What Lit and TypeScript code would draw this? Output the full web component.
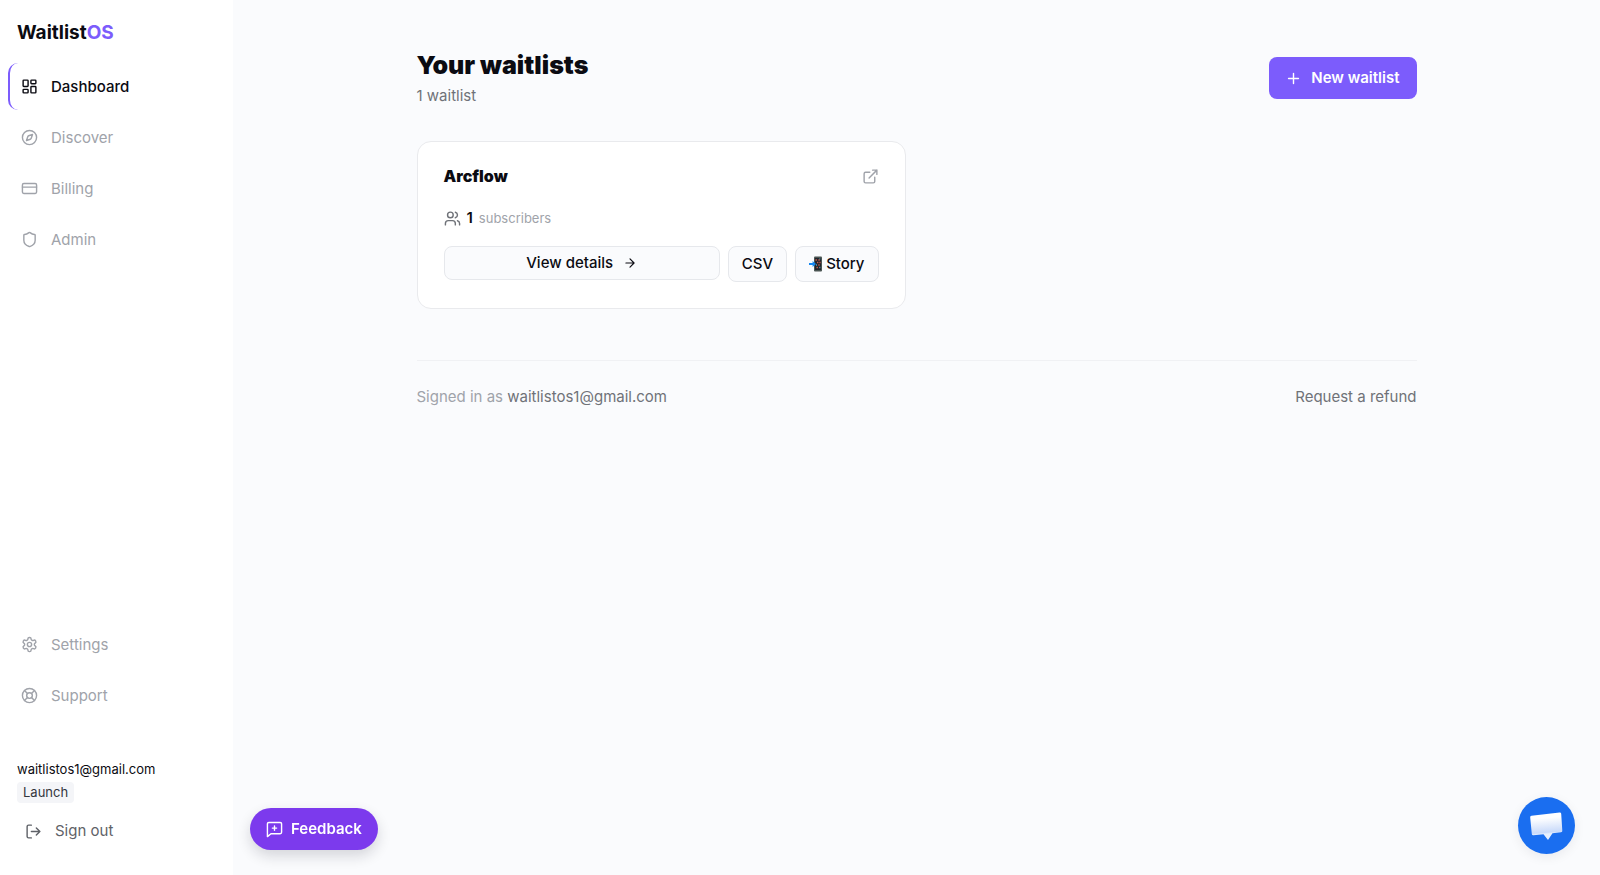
import { LitElement, html, css, svg } from "lit";
import { customElement, property } from "lit/decorators.js";

const ICONS: Record<string, unknown> = {
  dashboard: svg`<rect x="3" y="3" width="7" height="9" rx="1"/><rect x="14" y="3" width="7" height="5" rx="1"/><rect x="14" y="12" width="7" height="9" rx="1"/><rect x="3" y="16" width="7" height="5" rx="1"/>`,
  compass: svg`<circle cx="12" cy="12" r="10"/><path d="m16.24 7.76-1.8 5.41a2 2 0 0 1-1.27 1.27L7.76 16.24l1.8-5.41a2 2 0 0 1 1.27-1.27z"/>`,
  card: svg`<rect x="2" y="5" width="20" height="14" rx="2"/><path d="M2 10h20"/>`,
  shield: svg`<path d="M20 13c0 5-3.5 7.5-7.66 8.95a1 1 0 0 1-.67-.01C7.5 20.5 4 18 4 13V6a1 1 0 0 1 1-1c2 0 4.5-1.2 6.24-2.72a1.17 1.17 0 0 1 1.52 0C14.51 3.81 17 5 19 5a1 1 0 0 1 1 1z"/>`,
  settings: svg`<path d="M12.22 2h-.44a2 2 0 0 0-2 2v.18a2 2 0 0 1-1 1.73l-.43.25a2 2 0 0 1-2 0l-.15-.08a2 2 0 0 0-2.73.73l-.22.38a2 2 0 0 0 .73 2.73l.15.1a2 2 0 0 1 1 1.72v.51a2 2 0 0 1-1 1.74l-.15.09a2 2 0 0 0-.73 2.73l.22.38a2 2 0 0 0 2.73.73l.15-.08a2 2 0 0 1 2 0l.43.25a2 2 0 0 1 1 1.73V20a2 2 0 0 0 2 2h.44a2 2 0 0 0 2-2v-.18a2 2 0 0 1 1-1.73l.43-.25a2 2 0 0 1 2 0l.15.08a2 2 0 0 0 2.73-.73l.22-.39a2 2 0 0 0-.73-2.73l-.15-.08a2 2 0 0 1-1-1.74v-.5a2 2 0 0 1 1-1.74l.15-.09a2 2 0 0 0 .73-2.73l-.22-.38a2 2 0 0 0-2.73-.73l-.15.08a2 2 0 0 1-2 0l-.43-.25a2 2 0 0 1-1-1.73V4a2 2 0 0 0-2-2z"/><circle cx="12" cy="12" r="3"/>`,
  support: svg`<circle cx="12" cy="12" r="10"/><path d="m4.93 4.93 4.24 4.24M14.83 9.17l4.24-4.24M14.83 14.83l4.24 4.24M9.17 14.83l-4.24 4.24"/><circle cx="12" cy="12" r="4"/>`,
  signout: svg`<path d="M9 21H5a2 2 0 0 1-2-2V5a2 2 0 0 1 2-2h4M16 17l5-5-5-5M21 12H9"/>`,
  external: svg`<path d="M15 3h6v6M10 14 21 3M18 13v6a2 2 0 0 1-2 2H5a2 2 0 0 1-2-2V8a2 2 0 0 1 2-2h6"/>`,
  users: svg`<path d="M16 21v-2a4 4 0 0 0-4-4H6a4 4 0 0 0-4 4v2"/><circle cx="9" cy="7" r="4"/><path d="M22 21v-2a4 4 0 0 0-3-3.87M16 3.13a4 4 0 0 1 0 7.75"/>`,
  arrow: svg`<path d="M5 12h14M12 5l7 7-7 7"/>`,
  plus: svg`<path d="M5 12h14M12 5v14"/>`,
  feedback: svg`<path d="M22 16a2 2 0 0 1-2 2H7l-5 4V4a2 2 0 0 1 2-2h16a2 2 0 0 1 2 2zM12 7v6M9 10h6"/>`,
};

@customElement("line-icon")
export class LineIcon extends LitElement {
  @property() name = "";
  static styles = css`
    :host { display: block; flex: none; width: 17px; height: 17px; }
    svg {
      display: block; width: 100%; height: 100%; fill: none; stroke: currentColor;
      stroke-width: 2; stroke-linecap: round; stroke-linejoin: round;
    }
  `;
  render() {
    return html`<svg viewBox="0 0 24 24" aria-hidden="true">${ICONS[this.name]}</svg>`;
  }
}

interface NavItem { label: string; icon: string; active?: boolean; }

const PRIMARY: NavItem[] = [
  { label: "Dashboard", icon: "dashboard", active: true },
  { label: "Discover", icon: "compass" },
  { label: "Billing", icon: "card" },
  { label: "Admin", icon: "shield" },
];
const SECONDARY: NavItem[] = [
  { label: "Settings", icon: "settings" },
  { label: "Support", icon: "support" },
];

@customElement("app-sidebar")
export class AppSidebar extends LitElement {
  static styles = css`
    :host {
      display: flex; flex-direction: column; box-sizing: border-box;
      background: #fff; padding: 21px 8px 22px;
    }
    a { color: inherit; text-decoration: none; }
    .logo { margin: 0 9px 18px; font-size: 19px; line-height: 24px; font-weight: 700; color: #0b0b12; }
    .logo span { color: #7c5cfc; }
    nav { display: flex; flex-direction: column; gap: 4px; }
    .item {
      display: flex; align-items: center; gap: 13px; height: 47px; box-sizing: border-box;
      padding: 0 11px; border-left: 2px solid transparent; border-radius: 10px; color: #a0a3aa;
    }
    .active { color: #0b0b12; font-weight: 500; border-left-color: #7c5cfc; }
    .secondary { margin-top: auto; }
    .account { margin: 40px 9px 0; display: flex; flex-direction: column; align-items: flex-start; }
    .email { font-size: 13px; line-height: 20px; color: #0b0b12; }
    .badge {
      margin-top: 3px; padding: 0 6px; border-radius: 4px; background: #f4f5f8;
      color: #33363d; font-size: 13px; line-height: 21px;
    }
    .signout {
      display: flex; align-items: center; gap: 13px; margin-top: 6px; padding: 0 8px;
      height: 44px; border: 0; background: none; font: inherit; color: #5f6268;
    }
  `;
  private item = (i: NavItem) => html`
    <a class="item ${i.active ? "active" : ""}" href="#">
      <line-icon name=${i.icon}></line-icon><span>${i.label}</span>
    </a>`;
  render() {
    return html`
      <a class="logo" href="#">Waitlist<span>OS</span></a>
      <nav aria-label="Main">${PRIMARY.map(this.item)}</nav>
      <nav class="secondary" aria-label="Help">${SECONDARY.map(this.item)}</nav>
      <div class="account">
        <div class="email">waitlistos1@gmail.com</div>
        <div class="badge">Launch</div>
        <button class="signout"><line-icon name="signout"></line-icon>Sign out</button>
      </div>`;
  }
}

@customElement("waitlist-card")
export class WaitlistCard extends LitElement {
  @property() name = "";
  @property({ type: Number }) subscribers = 0;
  static styles = css`
    :host {
      display: block; box-sizing: border-box; padding: 24px 26px 26px; background: #fff;
      border: 1px solid #e9eaed; border-radius: 14px;
    }
    .head { display: flex; justify-content: space-between; align-items: center; height: 20px; }
    h2 { margin: 0; font-size: 16px; line-height: 20px; font-weight: 900; color: #0b0b12; }
    .open { color: #a0a3aa; }
    .stats { display: flex; align-items: center; gap: 6px; height: 24px; margin-top: 20px; color: #6f7278; }
    .stats strong { font-weight: 600; color: #0b0b12; }
    .stats span { font-size: 13px; color: #a0a3aa; }
    .actions { display: flex; align-items: flex-start; gap: 8px; margin-top: 16px; }
    button {
      display: flex; align-items: center; justify-content: center; box-sizing: border-box;
      height: 36px; padding: 0 13px; border: 1px solid #e6e8ec; border-radius: 8px;
      background: #fafbfd; color: #0b0b12; font: inherit; font-weight: 500;
    }
    .details { flex: 1; height: 34px; gap: 10px; }
    .details line-icon { width: 14px; height: 14px; }
    .story { gap: 4px; }
    .phone { width: 13px; height: 16px; }
  `;
  render() {
    return html`
      <div class="head">
        <h2>${this.name}</h2>
        <a class="open" href="#" aria-label="Open waitlist"><line-icon name="external"></line-icon></a>
      </div>
      <div class="stats">
        <line-icon name="users"></line-icon>
        <strong>${this.subscribers}</strong><span>subscribers</span>
      </div>
      <div class="actions">
        <button class="details">View details<line-icon name="arrow"></line-icon></button>
        <button>CSV</button>
        <button class="story">
          <svg class="phone" viewBox="0 0 13 16" aria-hidden="true">
            <rect x="5" y="0.5" width="8" height="15" rx="1" fill="#4a5553"/>
            <rect x="6" y="2" width="6" height="12" fill="#22242b"/>
            <path d="M6.5 4h1.4M9.4 4h1.4M8 6.5h1.4M10.4 6.5h1.2M9.3 9h1.4M7.5 11.5h1.4" stroke="#c65a4c" stroke-width="1.4"/>
            <path d="M10.4 2.9h1M7 9h1M10.2 11.5h1.2" stroke="#4f9fb4" stroke-width="1.4"/>
            <path d="M0 7h3.6V5L7 8l-3.400 3V9H0z" fill="#1687f0"/>
          </svg>Story
        </button>
      </div>`;
  }
}

@customElement("app-root")
export class AppRoot extends LitElement {
  static styles = css`
    :host {
      display: grid; grid-template-columns: 233px minmax(0, 1fr); min-height: 100vh;
      background: #fafbfd; color: #0b0b12;
      font-family: Inter, "Liberation Sans", sans-serif; font-size: 15px; line-height: 22px;
    }
    main { padding: 49px 24px; }
    .content { max-width: 1000px; margin: 0 auto; }
    header { display: flex; justify-content: space-between; align-items: center; }
    h1 { margin: 0; font-size: 25px; line-height: 32px; font-weight: 900; }
    .count { margin: 4px 0 0; color: #6f7278; }
    .new {
      display: flex; align-items: center; gap: 9px; height: 42px; padding: 0 17px 0 16px; border: 0;
      border-radius: 8px; background: #7c5cfc; color: #fff; font: inherit; font-weight: 600;
    }
    .grid { display: grid; grid-template-columns: repeat(2, minmax(0, 1fr)); gap: 22px; margin-top: 34px; }
    footer {
      display: flex; justify-content: space-between; margin-top: 51px; padding-top: 25px;
      border-top: 1px solid #f0f1f4; color: #a0a3aa;
    }
    footer span, footer a { color: #6f7278; text-decoration: none; }
    .feedback {
      position: fixed; left: 250px; bottom: 25px; display: flex; align-items: center; gap: 8px;
      height: 42px; padding: 0 16px; border: 0; border-radius: 21px; background: #7c3aed;
      color: #fff; font: inherit; font-weight: 600; box-shadow: 0 6px 14px rgba(20, 20, 40, 0.16);
    }
    .chat {
      position: fixed; right: 25px; bottom: 21px; width: 57px; height: 57px; padding: 0; border: 0;
      border-radius: 50%; background: #1a6ef0; box-shadow: 0 3px 12px rgba(20, 20, 40, 0.07);
    }
    .chat svg { display: block; width: 57px; height: 57px; }
  `;
  render() {
    return html`
      <app-sidebar></app-sidebar>
      <main>
        <div class="content">
          <header>
            <div>
              <h1>Your waitlists</h1>
              <p class="count">1 waitlist</p>
            </div>
            <button class="new"><line-icon name="plus"></line-icon>New waitlist</button>
          </header>
          <section class="grid">
            <waitlist-card name="Arcflow" subscribers="1"></waitlist-card>
          </section>
          <footer>
            <div>Signed in as <span>waitlistos1@gmail.com</span></div>
            <a href="#">Request a refund</a>
          </footer>
        </div>
      </main>
      <button class="feedback"><line-icon name="feedback"></line-icon>Feedback</button>
      <button class="chat" aria-label="Open chat">
        <svg viewBox="0 0 57 57" aria-hidden="true">
          <defs>
            <linearGradient id="bubble" x1="0.45" y1="0" x2="0.55" y2="1">
              <stop offset="0" stop-color="#fff"/><stop offset="0.2" stop-color="#fff"/><stop offset="0.72" stop-color="#c9dafa"/><stop offset="0.78" stop-color="#e6effe"/><stop offset="1" stop-color="#e6effe"/>
            </linearGradient>
          </defs>
          <path d="M13.500 18.700 41.500 15.500a1.500 1.500 0 0 1 1.700 1.300L44.300 33.500a1.500 1.500 0 0 1-1.300 1.700L34.500 36.200 30 43 25.500 37.200 15.500 38.300a1.500 1.500 0 0 1-1.700-1.300L12.200 20.400a1.500 1.500 0 0 1 1.300-1.700z" fill="url(#bubble)"/>
        </svg>
      </button>`;
  }
}
